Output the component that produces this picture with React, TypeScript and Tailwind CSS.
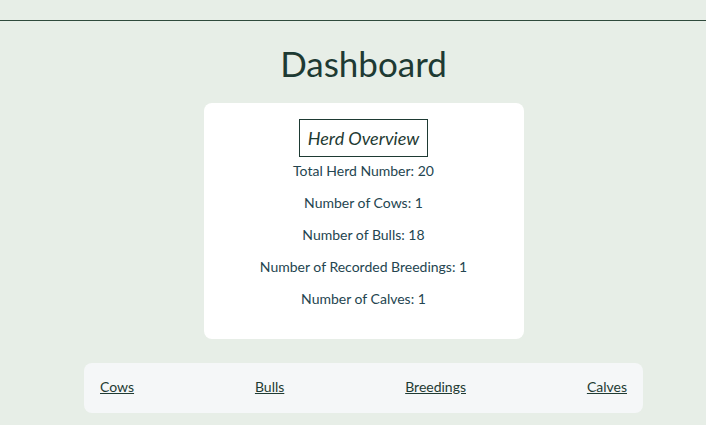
const STATS = [
  { label: "Total Herd Number", value: 20 },
  { label: "Number of Cows", value: 1 },
  { label: "Number of Bulls", value: 18 },
  { label: "Number of Recorded Breedings", value: 1 },
  { label: "Number of Calves", value: 1 },
];

const LINKS = ["Cows", "Bulls", "Breedings", "Calves"];

export default function App() {
  return (
    <div className="min-h-[425px] bg-[#e7eee7] text-[#1f3b33] font-['Lato',sans-serif]">
      <div className="h-[21px] border-b border-[#2f4a3c]" />

      <div className="pl-[21px]">
        <h1 className="mt-[20px] text-center text-[35px] leading-[44px] text-[#1e3a33]">Dashboard</h1>

        {/* overview card */}
        <div className="mx-auto mt-[18px] w-[320px] h-[236px] rounded-lg bg-white flex flex-col items-center pt-[16px]">
          <h2 className="border border-[#1e3a33] px-[8px] h-[38px] flex items-center italic text-[18px]">
            Herd Overview
          </h2>
          <div className="mt-[5px] flex flex-col items-center gap-[14px]">
            {STATS.map((s) => (
              <p key={s.label} className="text-[14px] leading-[18px] text-[#244550]">
                {s.label}: {s.value}
              </p>
            ))}
          </div>
        </div>

        {/* links bar */}
        <nav className="mx-auto mt-[24px] w-[559px] h-[50px] rounded-lg bg-[#f5f7f8] flex items-center justify-between px-[16px] pb-[4px]">
          {LINKS.map((l) => (
            <a key={l} href="#" className="underline text-[14px] text-[#1f3b33]">
              {l}
            </a>
          ))}
        </nav>
      </div>
    </div>
  );
}
